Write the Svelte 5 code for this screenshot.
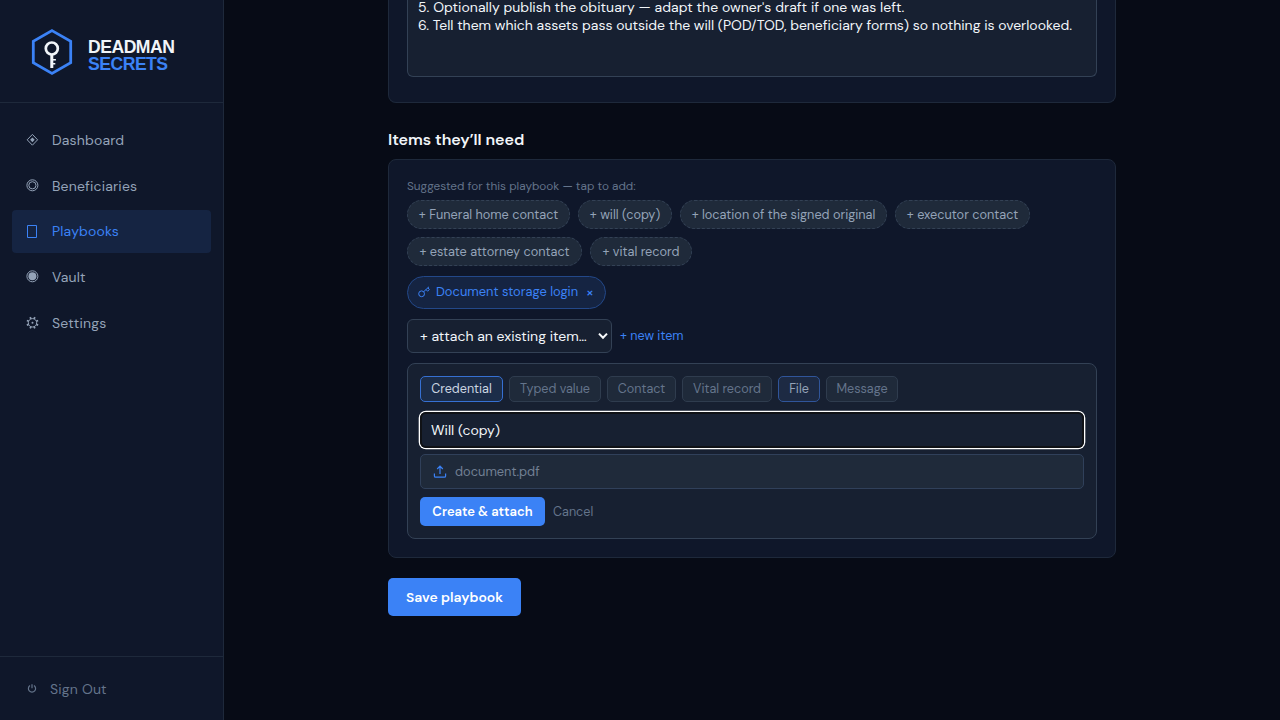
<script>
  const navItems = [
    { label: "Dashboard", icon: "diamond" },
    { label: "Beneficiaries", icon: "rings" },
    { label: "Playbooks", icon: "box", active: true },
    { label: "Vault", icon: "fisheye" },
    { label: "Settings", icon: "gear" },
  ];

  const suggestions = [
    { label: "Funeral home contact", width: 163 },
    { label: "will (copy)", width: 94 },
    { label: "location of the signed original", width: 207 },
    { label: "executor contact", width: 135 },
    { label: "estate attorney contact", width: 175 },
    { label: "vital record", width: 102 },
  ];

  const types = [
    { label: "Credential", width: 83, state: "selected" },
    { label: "Typed value", width: 92 },
    { label: "Contact", width: 69 },
    { label: "Vital record", width: 90 },
    { label: "File", width: 42, state: "fading" },
    { label: "Message", width: 72 },
  ];

  const gearTeeth = [0, 45, 90, 135, 180, 225, 270, 315];

  let itemName = $state("Will (copy)");
</script>

<div class="shell">
  <aside class="sidebar">
    <div class="brand">
      <svg width="48" height="54" viewBox="0 0 48 54" fill="none">
        <path
          d="M24 5.6 42.7 16.3V37.7L24 48.4 5.3 37.7V16.3Z"
          stroke="#3b82f6"
          stroke-width="2.8"
        />
        <circle cx="23.8" cy="23.5" r="6" stroke="#f1f5f9" stroke-width="2.7" />
        <path d="M22.3 29.5h3v4.6h2.6v1.5h-2.6v2.4h2v1.5h-2V43h-3z" fill="#f1f5f9" />
      </svg>
      <div class="brand-name">
        <span>DEADMAN</span>
        <span class="blue">SECRETS</span>
      </div>
    </div>

    <nav>
      {#each navItems as item}
        <a class="nav-item" class:active={item.active} href="#top">
          <svg class="nav-icon" width="14" height="14" viewBox="0 0 14 14" fill="none" stroke="currentColor">
            {#if item.icon === "diamond"}
              <path d="M6.4 1.4 11.6 6.8 6.4 12.2 1.2 6.8Z" />
              <path d="M6.4 4.4 8.7 6.8 6.4 9.2 4.1 6.8Z" fill="currentColor" stroke="none" />
            {:else if item.icon === "rings"}
              <circle cx="6.4" cy="6.3" r="5.5" />
              <circle cx="6.4" cy="6.3" r="3.6" />
            {:else if item.icon === "box"}
              <path d="M1.5 1.5h9v12h-9z" />
            {:else if item.icon === "fisheye"}
              <circle cx="6.4" cy="6.3" r="5.5" />
              <circle cx="6.4" cy="6.3" r="4" fill="currentColor" stroke="none" />
            {:else}
              <circle cx="6.5" cy="6.8" r="4.2" />
              <circle cx="6.5" cy="6.8" r="1" fill="currentColor" stroke="none" />
              {#each gearTeeth as angle}
                <path d="M6.5 2.6V.7" stroke-width="1.7" transform="rotate({angle + 22.5} 6.5 6.8)" />
              {/each}
            {/if}
          </svg>
          <span class="nav-label">{item.label}</span>
        </a>
      {/each}
    </nav>

    <div class="signout">
      <svg width="10" height="10" viewBox="0 0 10 10" fill="none" stroke="currentColor">
        <path d="M3 1.6a3.6 3.6 0 1 0 4 0M5 .2v4" stroke-width="1.2" />
      </svg>
      <span>Sign Out</span>
    </div>
  </aside>

  <main>
    <section class="card card-steps">
      <div class="steps">
        <p class="step5">5. Optionally publish the obituary — adapt the owner's draft if one was left.</p>
        <p class="step6">6. Tell them which assets pass outside the will (POD/TOD, beneficiary forms) so nothing is overlooked.</p>
      </div>
    </section>

    <h2>Items they’ll need</h2>

    <section class="card card-items">
      <p class="hint">Suggested for this playbook — tap to add:</p>
      <div class="suggestions">
        {#each suggestions as s}
          <button class="suggestion" style="width: {s.width}px">+ {s.label}</button>
        {/each}
      </div>

      <div class="attached">
        <svg width="12" height="12" viewBox="0 0 12 12" fill="none" stroke="currentColor">
          <circle cx="3.6" cy="7.8" r="2.9" />
          <path d="M5.7 5.7 11 .8M8 3.6l1.6 1.6 1.8-1.7L9.8 1.8" />
        </svg>
        <span class="attached-name">Document storage login</span>
        <span class="remove">×</span>
      </div>

      <div class="attach-row">
        <div class="select">
          <span>+ attach an existing item…</span>
          <svg width="10" height="8" viewBox="0 0 10 8" fill="none" stroke="#f8fafc" stroke-width="2">
            <path d="M1 1.6 5 5.8 9 1.6" />
          </svg>
        </div>
        <button class="link">+ new item</button>
      </div>

      <div class="panel">
        <div class="types">
          {#each types as t}
            <button class="type {t.state ?? ''}" style="width: {t.width}px">{t.label}</button>
          {/each}
        </div>
        <input class="name" bind:value={itemName} />
        <div class="upload">
          <svg width="14" height="14" viewBox="0 0 14 14" fill="none" stroke="#3b82f6" stroke-width="1.2">
            <path d="M1.4 8.5v2.4c0 .8.5 1.3 1.3 1.3h8.6c.8 0 1.3-.5 1.3-1.3V8.5M7 9V1.5M4.2 4l2.8-2.8L9.8 4" />
          </svg>
          <span>document.pdf</span>
        </div>
        <div class="actions">
          <button class="create">Create &amp; attach</button>
          <button class="cancel">Cancel</button>
        </div>
      </div>
    </section>

    <button class="save">Save playbook</button>
  </main>
</div>

<style>
  :global(body) {
    background: #070b16;
  }

  .shell {
    display: flex;
    height: 720px;
    overflow: hidden;
    background: #070b16;
    color: #f1f5f9;
    font-family: "DM Sans", Inter, sans-serif;
    font-size: 14px;
    font-optical-sizing: none;
    font-variation-settings: "opsz" 14;
  }

  .shell * {
    box-sizing: border-box;
  }

  p,
  h2 {
    margin: 0;
    white-space: nowrap;
  }

  button {
    font: inherit;
    font-variation-settings: inherit;
    padding: 0;
    white-space: nowrap;
    cursor: pointer;
  }

  /* ----- Sidebar ----- */

  .sidebar {
    display: flex;
    flex-direction: column;
    width: 224px;
    background: #0f172a;
    border-right: 1px solid #1e293b;
  }

  .brand {
    display: flex;
    align-items: center;
    height: 103px;
    padding: 1px 0 0 28px;
    gap: 12px;
    border-bottom: 1px solid #1e293b;
  }

  .brand-name {
    display: flex;
    flex-direction: column;
    padding-top: 8px;
    font: bold 17.6px/17px "Liberation Sans", Arial, sans-serif;
    letter-spacing: -0.5px;
  }

  .blue {
    color: #3b82f6;
  }

  nav {
    display: flex;
    flex-direction: column;
    flex: 1;
    gap: 2.7px;
    padding: 15.6px 12px;
  }

  .nav-item {
    display: flex;
    align-items: center;
    gap: 12px;
    height: 43px;
    padding-left: 14px;
    border-radius: 4px;
    color: #94a3b8;
    letter-spacing: 0.17px;
    text-decoration: none;
  }

  .nav-item.active {
    background: #152442;
    color: #3b82f6;
  }

  .signout {
    display: flex;
    align-items: center;
    gap: 13px;
    height: 64px;
    padding: 1px 0 0 27px;
    border-top: 1px solid #1e293b;
    color: #64748b;
    letter-spacing: 0.17px;
  }

  /* ----- Content ----- */

  main {
    display: flex;
    flex-direction: column;
    align-items: flex-start;
    width: 728px;
    margin-left: 164px;
  }

  .card {
    width: 728px;
    background: #0f172a;
    border: 1px solid #1e293b;
    border-radius: 8px;
    padding: 18px;
  }

  .card-steps {
    height: 103px;
    padding-top: 0;
    border-top: 0;
    border-radius: 0 0 8px 8px;
  }

  .steps {
    height: 77px;
    padding: 0 10px;
    background: #172031;
    border: 1px solid #334155;
    border-top: 0;
    border-radius: 0 0 6px 6px;
    line-height: 18px;
  }

  .step5 {
    height: 16px;
    line-height: 14px;
    letter-spacing: 0.04px;
  }

  .step6 {
    letter-spacing: -0.015px;
  }

  h2 {
    height: 56px;
    padding-top: 27px;
    font-size: 16px;
    line-height: 20px;
    font-weight: 600;
    letter-spacing: -0.05px;
  }

  .card-items {
    display: flex;
    flex-direction: column;
    align-items: flex-start;
    height: 399px;
  }

  .hint {
    height: 22px;
    font-size: 11.8px;
    line-height: 17px;
    color: #64748b;
  }

  .suggestions {
    display: flex;
    flex-wrap: wrap;
    gap: 8px;
    margin-bottom: 10px;
  }

  .suggestion {
    height: 29px;
    background: #1f2a3a;
    border: 1px dashed #334155;
    border-radius: 15px;
    color: #94a3b8;
    font-size: 12.7px;
  }

  .attached {
    display: flex;
    align-items: center;
    width: 199px;
    height: 33px;
    padding: 0 0 1px 10px;
    margin-bottom: 10px;
    background: #152442;
    border: 1px solid #234889;
    border-radius: 17px;
    color: #3b82f6;
    font-size: 12.9px;
  }

  .attached-name {
    width: 142px;
    margin: -1px 8px 0 6px;
    white-space: nowrap;
  }

  .remove {
    font-size: 14px;
    font-weight: 500;
  }

  .attach-row {
    display: flex;
    align-items: center;
    gap: 8px;
    margin-bottom: 10px;
  }

  .select {
    display: flex;
    align-items: center;
    justify-content: space-between;
    width: 205px;
    height: 34px;
    padding: 0 3px 0 12px;
    background: #172031;
    border: 1px solid #334155;
    border-radius: 6px;
    white-space: nowrap;
  }

  .link,
  .cancel {
    border: 0;
    background: none;
    color: #3b82f6;
    font-size: 12.6px;
  }

  .panel {
    width: 690px;
    height: 176px;
    padding: 12px;
    background: #172031;
    border: 1px solid #334155;
    border-radius: 8px;
  }

  .types {
    display: flex;
    gap: 6px;
    margin-bottom: 10px;
  }

  .type {
    height: 26px;
    background: #1f2a3a;
    border: 1px solid #2f3c4e;
    border-radius: 5px;
    color: #64748b;
    font-size: 12.6px;
  }

  .type.selected {
    background: #1c2d49;
    border-color: #3670d2;
    color: #cbd5e1;
  }

  .type.fading {
    background: #1d2a43;
    border-color: #30559a;
    color: #94a3b8;
  }

  /* Two-tone focus ring: white outside, dark inside */
  .name {
    display: block;
    width: 664px;
    height: 36px;
    padding: 0 11px;
    margin-bottom: 6px;
    background: #172031;
    border: 0;
    border-radius: 6px;
    outline: none;
    box-shadow:
      0 0 0 1.3px #fff,
      inset 0 0 0 2px #101216;
    color: #f1f5f9;
    font: inherit;
    font-variation-settings: inherit;
  }

  .upload {
    display: flex;
    align-items: center;
    gap: 8px;
    height: 35px;
    padding-left: 12px;
    margin-bottom: 8px;
    background: #1f2a3a;
    border: 1px solid #30405a;
    border-radius: 5px;
    color: #728094;
    font-size: 12.85px;
  }

  .actions {
    display: flex;
    gap: 8px;
  }

  .create,
  .save {
    border: 0;
    border-radius: 5px;
    background: #3b82f6;
    color: #fff;
    font-weight: 600;
  }

  .create {
    width: 125px;
    height: 29px;
    font-size: 13px;
  }

  .cancel {
    color: #64748b;
  }

  .save {
    width: 133px;
    height: 38px;
    margin-top: 20px;
    font-size: 13.9px;
  }
</style>
